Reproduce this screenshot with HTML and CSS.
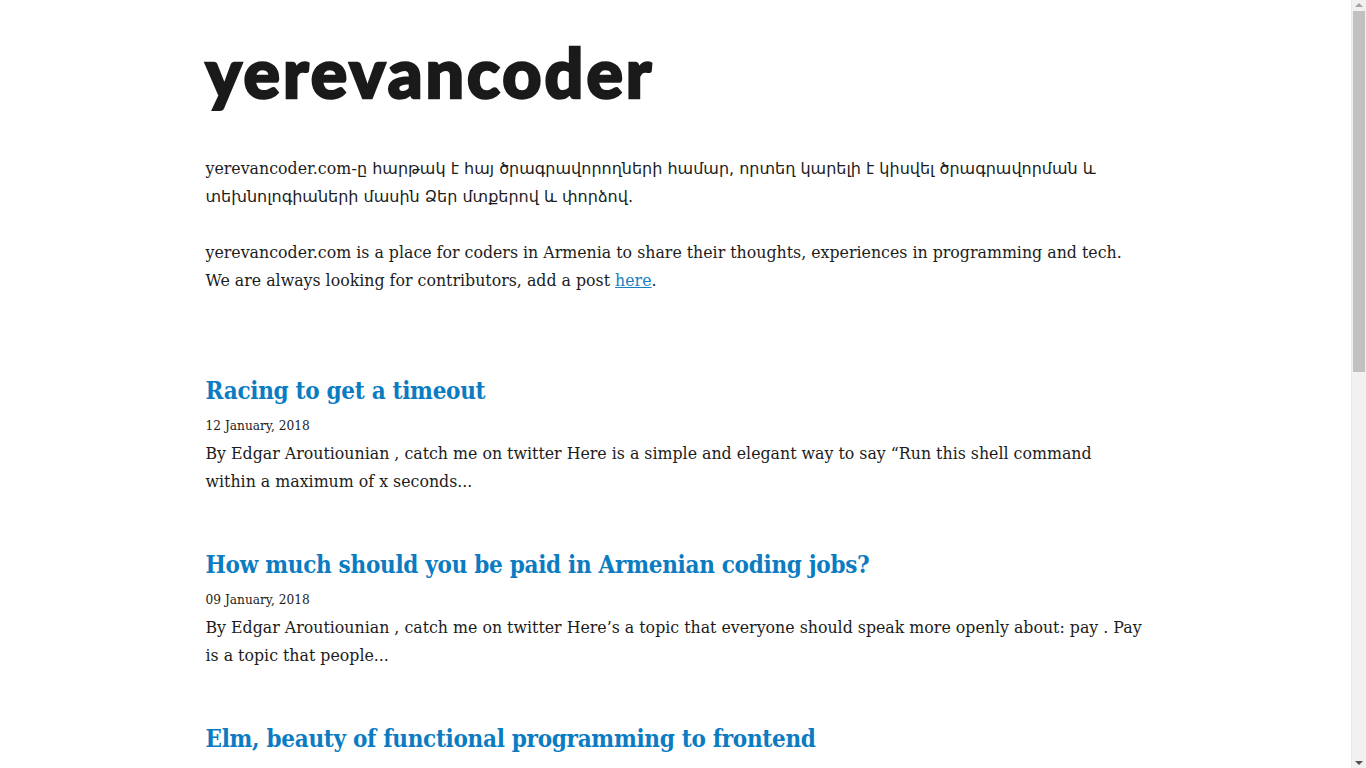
FILE: index.html
```html
<!DOCTYPE html>
<html lang="en">
<head>
<meta charset="utf-8">
<title>yerevancoder</title>
<link rel="stylesheet" href="styles.css">
</head>
<body>
<div class="page">
  <header class="site-header">
    <h1 class="logo">yerevancoder</h1>
  </header>
  <section class="intro">
    <p>yerevancoder.com<span class="hy">-ը հարթակ է հայ ծրագրավորողների համար, որտեղ կարելի է կիսվել ծրագրավորման և տեխնոլոգիաների մասին Ձեր մտքերով և փորձով.</span></p>
    <p>yerevancoder.com is a place for coders in Armenia to share their thoughts, experiences in programming and tech. We are always looking for contributors, add a post <a href="#">here</a>.</p>
  </section>
  <main class="posts">
    <article class="post">
      <h2 class="post-title"><a href="#">Racing to get a timeout</a></h2>
      <div class="post-date">12 January, 2018</div>
      <p class="post-excerpt">By Edgar Aroutiounian , catch me on twitter Here is a simple and elegant way to say “Run this shell command within a maximum of x seconds...</p>
    </article>
    <article class="post">
      <h2 class="post-title"><a href="#">How much should you be paid in Armenian coding jobs?</a></h2>
      <div class="post-date">09 January, 2018</div>
      <p class="post-excerpt">By Edgar Aroutiounian , catch me on twitter Here’s a topic that everyone should speak more openly about: pay . Pay is a topic that people...</p>
    </article>
    <article class="post">
      <h2 class="post-title"><a href="#">Elm, beauty of functional programming to frontend</a></h2>
      <div class="post-date">05 January, 2018</div>
      <p class="post-excerpt">By Edgar Aroutiounian , catch me on twitter Functional programming is becoming more and more popular on the frontend...</p>
    </article>
  </main>
</div>
<div class="scrollbar" aria-hidden="true">
  <div class="sb-arrow sb-up"></div>
  <div class="sb-track"><div class="sb-thumb"></div></div>
  <div class="sb-arrow sb-down"></div>
</div>
</body>
</html>
```
FILE: styles.css
```css
html, body {
  margin: 0;
  padding: 0;
  background: #ffffff;
}
body {
  font-family: "DejaVu Serif", "Liberation Serif", serif;
  color: #1c1c1c;
  font-size: 15.8px;
  line-height: 28px;
  margin-right: 15px;
}
.page {
  max-width: 940px;
  margin: 0 auto;
  padding: 0 0 200px;
}
.site-header {
  padding-top: 30px;
}
.logo {
  margin: 0;
  font-family: "Lato", "Inter", sans-serif;
  font-weight: 900;
  font-size: 68px;
  line-height: 84px;
  letter-spacing: 3px;
  color: #1a1a1a;
  -webkit-text-stroke: 2.4px #1a1a1a;
}
.intro {
  margin-top: 41px;
}
.intro p {
  margin: 0 0 28px;
}
.hy {
  font-family: "DejaVu Sans", sans-serif;
  font-size: 16px;
}
.intro a {
  color: #1a7fbf;
  text-decoration: underline;
}
.posts {
  margin-top: 80px;
}
.post {
  margin-bottom: 53px;
}
.post-title {
  margin: 0;
  font-size: 24px;
  line-height: 32px;
  font-weight: 700;
  font-stretch: condensed;
  letter-spacing: -0.3px;
}
.post-title a {
  color: #0b7cc1;
  text-decoration: none;
}
.post-date {
  margin-top: 9px;
  font-size: 12.2px;
  line-height: 20px;
}
.post-excerpt {
  margin: 4px 0 0;
}
.scrollbar {
  position: fixed;
  top: 0;
  right: 0;
  width: 15px;
  height: 100vh;
  background: #f1f1f1;
  border-left: 1px solid #e8e8e8;
  box-sizing: border-box;
  display: flex;
  flex-direction: column;
}
.sb-arrow {
  height: 11px;
  flex: none;
  position: relative;
}
.sb-up::after, .sb-down::after {
  content: "";
  position: absolute;
  left: 3px;
  border-left: 4px solid transparent;
  border-right: 4px solid transparent;
}
.sb-up::after {
  top: 3px;
  border-bottom: 4px solid #a3a3a3;
}
.sb-down::after {
  bottom: 3px;
  border-top: 4px solid #505050;
}
.sb-track {
  flex: 1;
  padding: 0 1px;
}
.sb-thumb {
  height: 361px;
  background: #c1c1c1;
}
```
